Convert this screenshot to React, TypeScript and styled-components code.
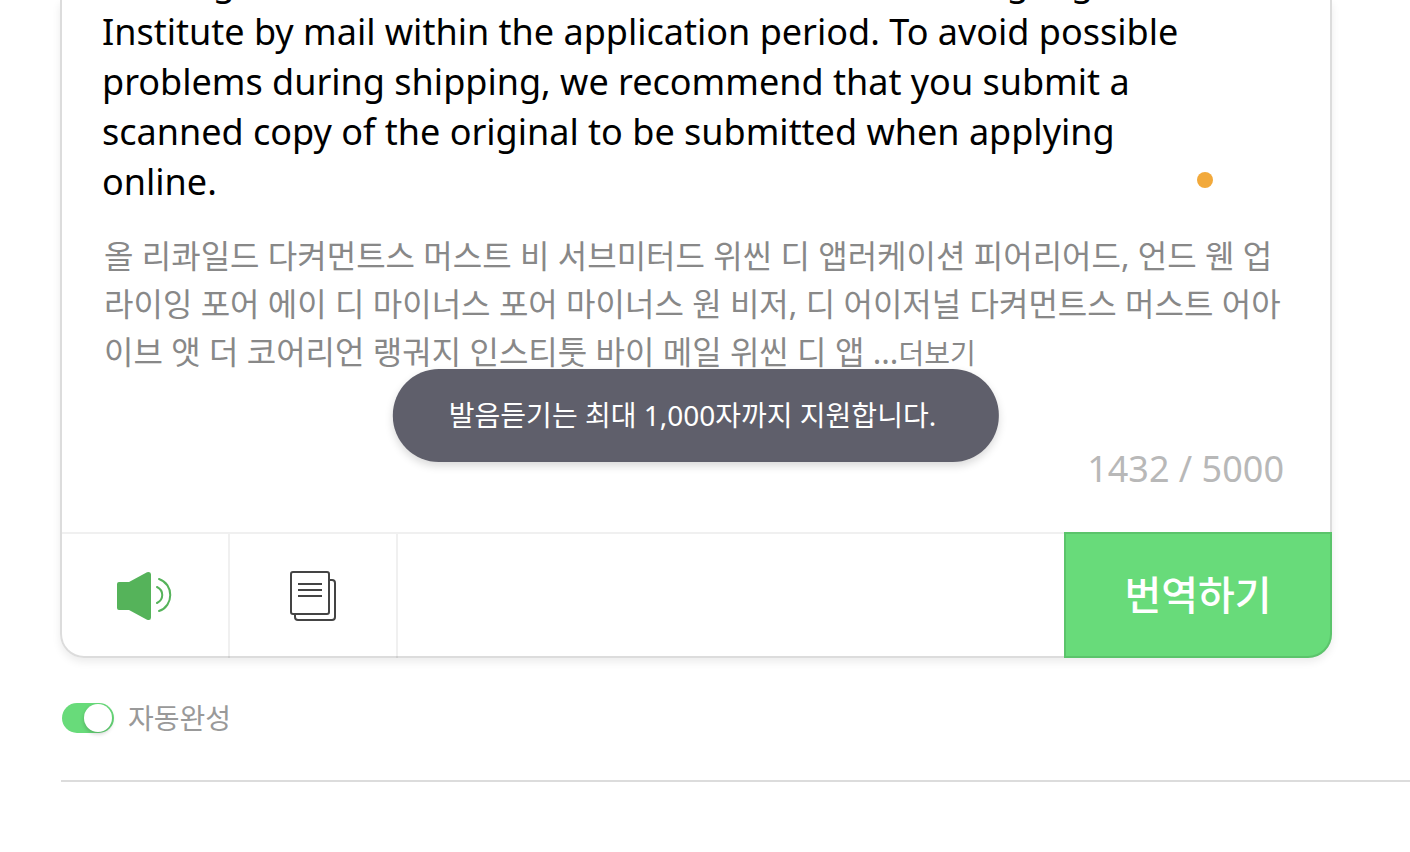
import React from "react";
import styled, { createGlobalStyle } from "styled-components";

const GlobalStyle = createGlobalStyle`
  *, *::before, *::after { box-sizing: border-box; }
  body {
    margin: 0;
    background: #fff;
    font-family: "Noto Sans", "Noto Sans CJK KR", sans-serif;
  }
  button, textarea { font-family: inherit; margin: 0; }
`;

const Page = styled.main`
  padding-left: 60px;
`;

const Card = styled.section`
  position: relative;
  margin-right: 78px;
  border: 2px solid #dcdcdc;
  border-top: 0;
  border-radius: 0 0 24px 24px;
  box-shadow: 0 4px 8px rgba(0, 0, 0, 0.08);
`;

const Editor = styled.div`
  display: flex;
  align-items: flex-end;
  height: 207px;
  padding: 0 117px 0 40px;
  overflow: hidden;
`;

const SourceText = styled.textarea`
  flex: 1;
  height: 250px;
  padding: 0;
  border: 0;
  outline: 0;
  resize: none;
  overflow: hidden;
  background: transparent;
  color: #000;
  font-size: 36px;
  line-height: 50px;
`;

const StatusDot = styled.span`
  width: 16px;
  height: 16px;
  margin-bottom: 19px;
  border-radius: 50%;
  background: #f2a93b;
`;

const Pronunciation = styled.p`
  margin: 0;
  padding: 25px 42px 0;
  color: #888;
  font-size: 32px;
  line-height: 48px;
`;

const MoreButton = styled.button`
  padding: 0;
  border: 0;
  background: none;
  color: inherit;
  font-size: 28px;
  line-height: 40px;
  cursor: pointer;
`;

const Counter = styled.div`
  padding: 68px 46px 38px;
  color: #b8b8b8;
  font-size: 36px;
  line-height: 50px;
  text-align: right;
`;

const Toast = styled.div`
  position: absolute;
  left: 50%;
  bottom: 194px;
  transform: translateX(-50%);
  padding: 26px 63px 27px 56px;
  border-radius: 46px;
  background: #5f5f6b;
  box-shadow: 0 4px 8px rgba(0, 0, 0, 0.15);
  color: #fff;
  font-size: 28px;
  line-height: 40px;
  white-space: nowrap;
`;

const Toolbar = styled.div`
  display: flex;
  height: 124px;
  border-top: 2px solid #f0f0f0;
`;

const ToolButton = styled.button`
  display: flex;
  align-items: center;
  justify-content: center;
  width: 168px;
  margin-bottom: -2px;
  padding: 0;
  border: 0;
  border-right: 2px solid rgba(0, 0, 0, 0.06);
  background: none;
  cursor: pointer;
`;

const TranslateButton = styled.button`
  width: 268px;
  margin: -2px -2px -2px auto;
  padding: 0 0 4px;
  border: 2px solid #5bc46b;
  border-radius: 0 0 24px 0;
  background: #68db7a;
  color: #fff;
  font-size: 40px;
  font-weight: 500;
  cursor: pointer;
`;

const ToggleLabel = styled.label`
  display: inline-flex;
  align-items: center;
  gap: 14px;
  margin: 40px 0 0 2px;
  color: #999;
  font-size: 28px;
  line-height: 40px;
`;

const Toggle = styled.input`
  appearance: none;
  display: flex;
  align-items: center;
  width: 52px;
  height: 30px;
  margin: 0;
  padding: 0 2px;
  border-radius: 15px;
  background: #ccc;

  &::after {
    content: "";
    width: 28px;
    height: 28px;
    border-radius: 50%;
    background: #fff;
    box-shadow: 0 2px 4px rgba(0, 0, 0, 0.2);
  }

  &:checked {
    justify-content: flex-end;
    background: #68db7a;
  }
`;

const Divider = styled.hr`
  height: 2px;
  margin: 42px 0 0 1px;
  border: 0;
  background: #dcdcdc;
`;

const SpeakerIcon = () => (
  <svg width="58" height="50" viewBox="0 0 58 50" fill="none" aria-hidden="true">
    <path
      d="M3 11H13L31 1.300Q35 0 35 3.500V46.500Q35 50 31 48.700L13 39H3Q1 39 1 37V13Q1 11 3 11Z"
      fill="#55b35a"
    />
    <path
      d="M41 16C48 19.500 48 28.500 41 32M43 8C58 13 58 35 43 40"
      stroke="#55b35a"
      strokeWidth="2"
      strokeLinecap="round"
    />
  </svg>
);

const DocumentIcon = () => (
  <svg width="46" height="50" viewBox="0 0 46 50" fill="none" stroke="#444" strokeWidth="2" aria-hidden="true">
    <rect x="1" y="1" width="38" height="42" rx="2" />
    <path d="M39 9H42Q45 9 45 12V46Q45 49 42 49H8Q5 49 5 46V43M8 13H32M8 19H32M8 25H32" />
  </svg>
);

const sourceText =
  "the original documents must arrive at the Korean Language Institute by mail within the application period. To avoid possible problems during shipping, we recommend that you submit a scanned copy of the original to be submitted when applying online.";

const pronunciation =
  "올 리콰일드 다켜먼트스 머스트 비 서브미터드 위씬 디 앱러케이션 피어리어드, 언드 웬 업라이잉 포어 에이 디 마이너스 포어 마이너스 원 비저, 디 어이저널 다켜먼트스 머스트 어아이브 앳 더 코어리언 랭궈지 인스티툿 바이 메일 위씬 디 앱 ...";

export default function App() {
  return (
    <>
      <GlobalStyle />
      <Page>
        <Card>
          <Editor>
            <SourceText aria-label="번역할 내용" spellCheck={false} defaultValue={sourceText} />
            <StatusDot />
          </Editor>
          <Pronunciation>
            {pronunciation}
            <MoreButton type="button">더보기</MoreButton>
          </Pronunciation>
          <Counter>1432 / 5000</Counter>
          <Toolbar>
            <ToolButton type="button" aria-label="발음듣기">
              <SpeakerIcon />
            </ToolButton>
            <ToolButton type="button" aria-label="복사">
              <DocumentIcon />
            </ToolButton>
            <TranslateButton type="button">번역하기</TranslateButton>
          </Toolbar>
          <Toast role="status">발음듣기는 최대 1,000자까지 지원합니다.</Toast>
        </Card>
        <ToggleLabel>
          <Toggle type="checkbox" role="switch" defaultChecked />
          자동완성
        </ToggleLabel>
        <Divider />
      </Page>
    </>
  );
}
